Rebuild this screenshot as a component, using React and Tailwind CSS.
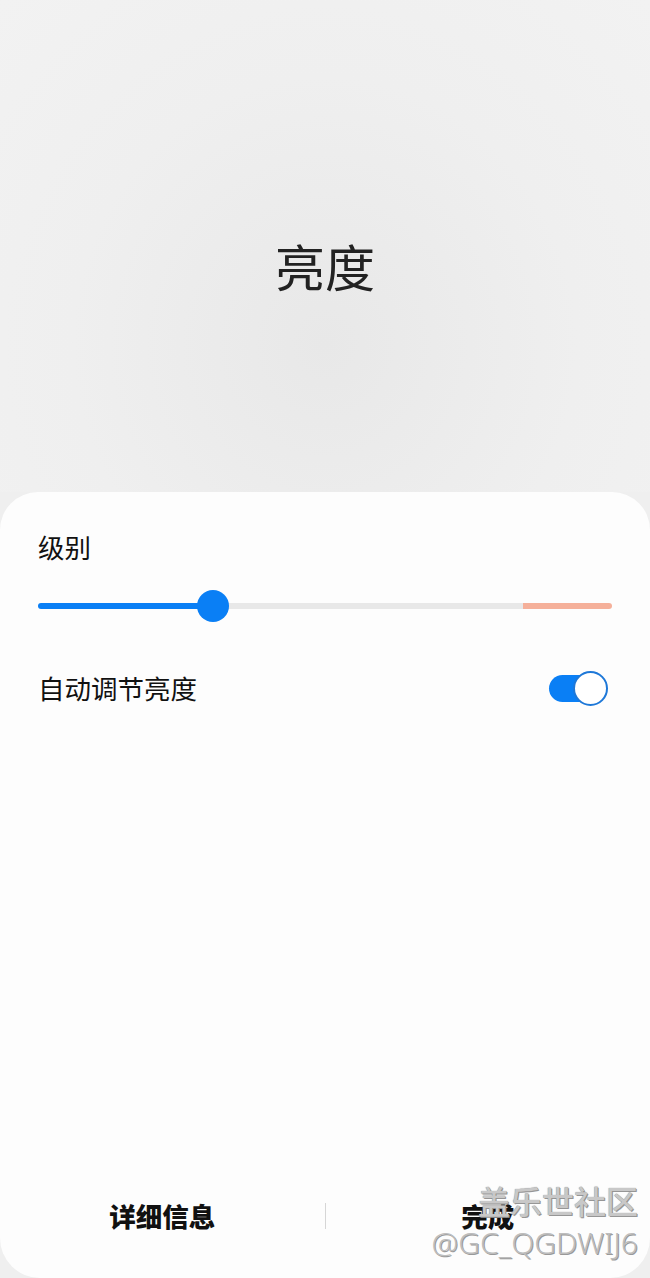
export default function App() {
  const font = { fontFamily: '"Noto Sans CJK SC", "Noto Sans", sans-serif' };
  return (
    <div
      className="relative w-[650px] h-[1278px] overflow-hidden bg-[#efefef] flex flex-col"
      style={font}
    >
      <div className="h-[492px] shrink-0 flex justify-center pt-[233px] bg-[radial-gradient(ellipse_at_50%_70%,#e8e8e8_0%,#efefef_55%,#f2f2f2_100%)]">
        <h1 className="text-[50px] leading-[64px] text-[#222]">亮度</h1>
      </div>

      <div className="flex-1 flex flex-col bg-[#fdfdfd] rounded-t-[38px] rounded-b-[40px] px-[38px]">
        <div className="pt-[37px] text-[26.5px] leading-[36px] text-[#111]">级别</div>

        <div className="relative mt-[25px] h-[32px] flex items-center">
          <div className="flex w-full h-[6px] rounded-full overflow-hidden">
            <div className="w-[175px] bg-[#0a7ff5]" />
            <div className="flex-1 bg-[#e8e8e8]" />
            <div className="w-[89px] bg-[#f5b09a]" />
          </div>
          <div className="absolute left-[159px] top-0 w-[32px] h-[32px] rounded-full bg-[#0a7ff5]" />
        </div>

        <div className="mt-[48px] flex items-center justify-between">
          <span className="text-[26.5px] leading-[36px] text-[#111]">自动调节亮度</span>
          <div className="relative w-[59px] h-[35px] mr-[4px]">
            <div className="absolute left-0 top-[4px] w-[50px] h-[27px] rounded-full bg-[#0a7ff5]" />
            <div className="absolute right-0 top-0 w-[35px] h-[35px] rounded-full bg-white border-[2px] border-[#1e78d8]" />
          </div>
        </div>

        <div className="mt-auto mb-[44px] flex items-center -mx-[38px]">
          <div className="flex-1 text-center text-[26.5px] font-black text-[#111] leading-[36px]">详细信息</div>
          <div className="w-px h-[26px] bg-[#d6d6d6]" />
          <div className="flex-1 text-center text-[26.5px] font-black text-[#111] leading-[36px]">完成</div>
        </div>
      </div>

      <div className="absolute right-[12px] bottom-[20px] flex flex-col items-end gap-[12px] pointer-events-none">
        <span className="text-[32px] leading-[32px] font-medium text-[#c8c8c8] [text-shadow:0_0_1px_#777,1px_1px_0_#999]">
          盖乐世社区
        </span>
        <span
          className="text-[30px] leading-[30px] text-[#bdbdbd] [text-shadow:1px_1px_0_#999]"
          style={{ fontFamily: '"Noto Sans", sans-serif', fontWeight: 300 }}
        >
          @GC_QGDWIJ6
        </span>
      </div>
    </div>
  );
}
